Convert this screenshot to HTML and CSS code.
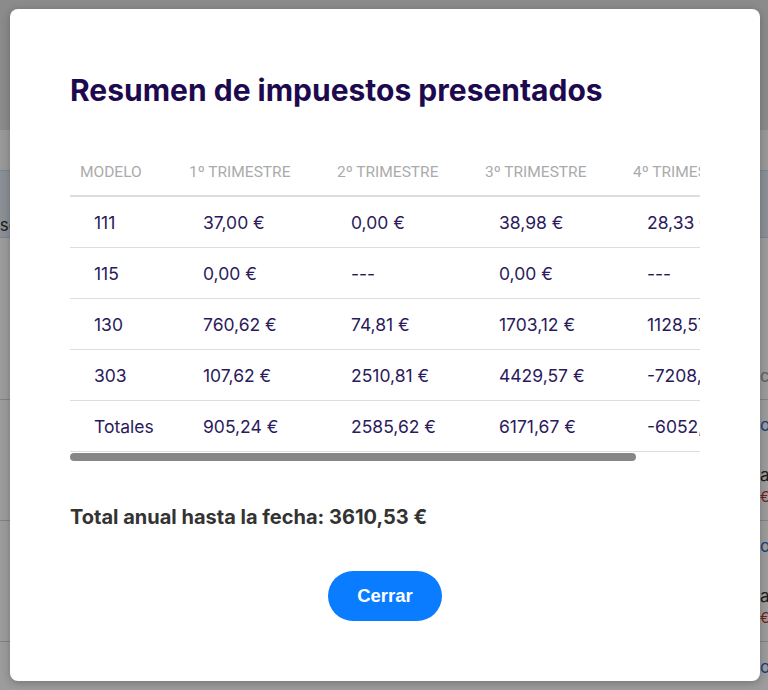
FILE: index.html
```html
<!DOCTYPE html>
<html lang="es">
<head>
<meta charset="utf-8">
<title>Resumen de impuestos presentados</title>
<link rel="stylesheet" href="styles.css">
</head>
<body>
<div class="page">
  <div class="page-top"></div>
  <div class="page-gap"></div>
  <div class="page-band"><span class="band-text">Base</span></div>
  <div class="page-section">
    <span class="edge-right grey">ci</span>
  </div>
  <div class="page-row">
    <span class="edge-right blue">o</span><span class="edge-right dark">ar</span><span class="edge-right red">€</span>
  </div>
  <div class="page-row">
    <span class="edge-right blue">o</span><span class="edge-right dark">ar</span><span class="edge-right red">€</span>
  </div>
  <div class="page-row last">
    <span class="edge-right blue">o</span>
  </div>
</div>
<div class="overlay"></div>
<div class="modal">
  <h1 class="title">Resumen de impuestos presentados</h1>
  <div class="table-wrap">
    <table class="tax-table">
      <thead>
        <tr>
          <th class="c1">Modelo</th>
          <th>1º Trimestre</th>
          <th>2º Trimestre</th>
          <th>3º Trimestre</th>
          <th>4º Trimestre</th>
        </tr>
      </thead>
      <tbody>
        <tr><td>111</td><td>37,00 €</td><td>0,00 €</td><td>38,98 €</td><td>28,33 €</td></tr>
        <tr><td>115</td><td>0,00 €</td><td>---</td><td>0,00 €</td><td>---</td></tr>
        <tr><td>130</td><td>760,62 €</td><td>74,81 €</td><td>1703,12 €</td><td>1128,57 €</td></tr>
        <tr><td>303</td><td>107,62 €</td><td>2510,81 €</td><td>4429,57 €</td><td>-7208,11 €</td></tr>
        <tr><td>Totales</td><td>905,24 €</td><td>2585,62 €</td><td>6171,67 €</td><td>-6052,00 €</td></tr>
      </tbody>
    </table>
  </div>
  <div class="scroll-track"><div class="scroll-thumb"></div></div>
  <p class="total">Total anual hasta la fecha: 3610,53 €</p>
  <div class="actions"><button class="btn-close">Cerrar</button></div>
</div>
</body>
</html>
```
FILE: styles.css
```css
html, body {
  margin: 0;
  padding: 0;
}
body {
  width: 768px;
  height: 690px;
  overflow: hidden;
  position: relative;
  font-family: Inter, "Noto Sans", sans-serif;
  background: #ffffff;
}
.page {
  display: flex;
  flex-direction: column;
  height: 690px;
  overflow: hidden;
}
.page > div {
  flex-shrink: 0;
  box-sizing: border-box;
  position: relative;
}
.page-top {
  height: 130px;
  background: #e4e4e4;
}
.page-gap {
  height: 40px;
  background: #fbfbfb;
}
.page-band {
  height: 68px;
  background: #e4ebf5;
  border-top: 1px solid #c9d8ee;
  border-bottom: 1px solid #c9d8ee;
  padding-top: 44px;
}
.band-text {
  display: block;
  margin-left: -21px;
  font-size: 17px;
  line-height: 20px;
  color: #333;
}
.page-section {
  height: 162px;
  border-bottom: 1px solid #d4d4d4;
}
.page-row {
  height: 121px;
  border-bottom: 1px solid #d4d4d4;
}
.page > .page-row.last {
  height: auto;
  flex: 1 1 0;
  border-bottom: none;
}
.edge-right {
  position: absolute;
  left: 760px;
  font-size: 17px;
  line-height: 20px;
}
.grey { color: #a0a0a0; top: 128px; }
.blue { color: #2a6cd0; top: 15px; }
.dark { color: #333; top: 65px; }
.red { color: #c0392b; top: 87px; font-size: 14px; }
.overlay {
  position: absolute;
  inset: 0;
  background: rgba(0, 0, 0, 0.39);
}
.modal {
  position: absolute;
  left: 10px;
  top: 9px;
  width: 750px;
  height: 672px;
  box-sizing: border-box;
  padding: 0 60px;
  background: #fff;
  border-radius: 8px;
  box-shadow: 0 2px 8px rgba(0,0,0,0.25);
  display: flex;
  flex-direction: column;
}
.title {
  margin: 63px 0 0;
  font-size: 30px;
  font-weight: 700;
  line-height: 36px;
  color: #1d0a4e;
}
.table-wrap {
  margin-top: 40px;
  width: 630px;
  overflow: hidden;
}
.tax-table {
  border-collapse: collapse;
  width: 701px;
  min-width: 701px;
  table-layout: fixed;
}
.tax-table th {
  font-family: Roboto, "Liberation Sans", sans-serif;
  font-weight: 400;
  font-size: 15.5px;
  color: #ababab;
  text-transform: uppercase;
  text-align: left;
  white-space: nowrap;
  overflow: hidden;
  padding: 0 10px;
  height: 47px;
  width: 128px;
  border-bottom: 2px solid #dddddd;
}
.tax-table th.c1 {
  width: 89px;
}
.tax-table td {
  font-size: 17.5px;
  color: #2b1a5c;
  padding: 0 0 0 24px;
  height: 50px;
  white-space: nowrap;
  overflow: hidden;
  border-bottom: 1px solid #dddddd;
}
.scroll-track {
  width: 630px;
  height: 10px;
  padding-top: 1px;
  box-sizing: border-box;
}
.scroll-thumb {
  width: 566px;
  height: 8px;
  border-radius: 4px;
  background: #878787;
}
.total {
  margin: 43px 0 0;
  font-size: 20px;
  font-weight: 700;
  color: #333;
  line-height: 24px;
}
.actions {
  display: flex;
  justify-content: center;
  margin-top: 42px;
}
.btn-close {
  width: 114px;
  height: 50px;
  border: none;
  border-radius: 25px;
  background: #0a7cff;
  color: #fff;
  font-family: "Liberation Sans", Arial, sans-serif;
  font-weight: 700;
  font-size: 18.5px;
  padding: 0;
}
```
